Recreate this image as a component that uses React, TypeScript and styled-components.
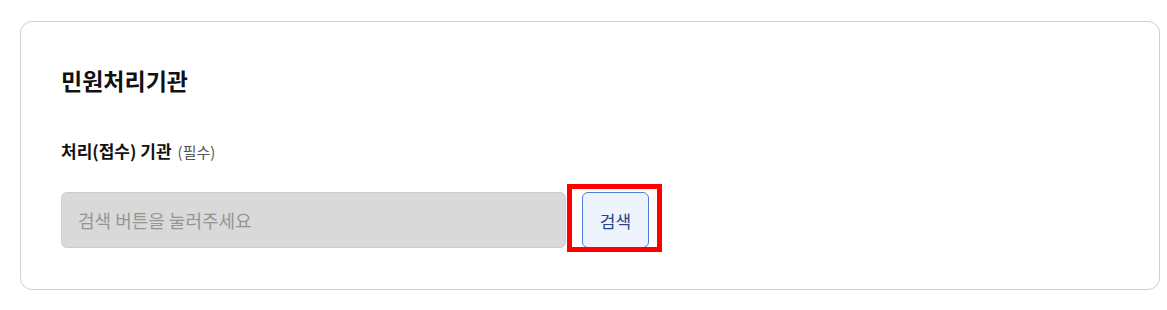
import React from "react";
import styled, { createGlobalStyle } from "styled-components";

const GlobalStyle = createGlobalStyle`
  body {
    margin: 0;
    background: #ffffff;
    font-family: "Noto Sans CJK KR", "Noto Sans", sans-serif;
    color: #111111;
  }
`;

const Page = styled.div`
  padding: 21px 8px 0 20px;
`;

const Card = styled.section`
  box-sizing: border-box;
  width: 1140px;
  border: 1px solid #cfcfcf;
  border-radius: 12px;
  padding: 43px 40px 41px;
`;

const Title = styled.h2`
  margin: 0;
  font-size: 23px;
  line-height: 30px;
  font-weight: 700;
  color: #111111;
`;

const Label = styled.div`
  margin-top: 45px;
  font-size: 17px;
  line-height: 22px;
  font-weight: 700;
  color: #111111;
`;

const Required = styled.span`
  margin-left: 6px;
  font-size: 15px;
  font-weight: 400;
  color: #555555;
`;

const Row = styled.div`
  display: flex;
  align-items: stretch;
  gap: 16px;
  margin-top: 29px;
  height: 56px;
`;

const Input = styled.input`
  box-sizing: border-box;
  width: 505px;
  height: 100%;
  padding: 0 16px;
  border: 1px solid #cccccc;
  border-radius: 6px;
  background: #d9d9d9;
  font-family: inherit;
  font-size: 18px;
  color: #333333;
  outline: none;

  &::placeholder {
    color: #959595;
  }
`;

const ButtonWrap = styled.div`
  position: relative;
  display: flex;
`;

const Highlight = styled.span`
  position: absolute;
  left: -15px;
  right: -13px;
  top: -8px;
  bottom: -4px;
  border: 5px solid #ff0000;
  pointer-events: none;
`;

const SearchButton = styled.button`
  box-sizing: border-box;
  width: 67px;
  height: 100%;
  border: 1px solid #4a7de0;
  border-radius: 6px;
  background: #eef4fd;
  font-family: inherit;
  font-size: 17px;
  color: #27458c;
  cursor: pointer;
`;

export default function App() {
  return (
    <>
      <GlobalStyle />
      <Page>
        <Card>
          <Title>민원처리기관</Title>
          <Label>
            처리(접수) 기관<Required>(필수)</Required>
          </Label>
          <Row>
            <Input placeholder="검색 버튼을 눌러주세요" disabled />
            <ButtonWrap>
              <SearchButton>검색</SearchButton>
              <Highlight />
            </ButtonWrap>
          </Row>
        </Card>
      </Page>
    </>
  );
}
